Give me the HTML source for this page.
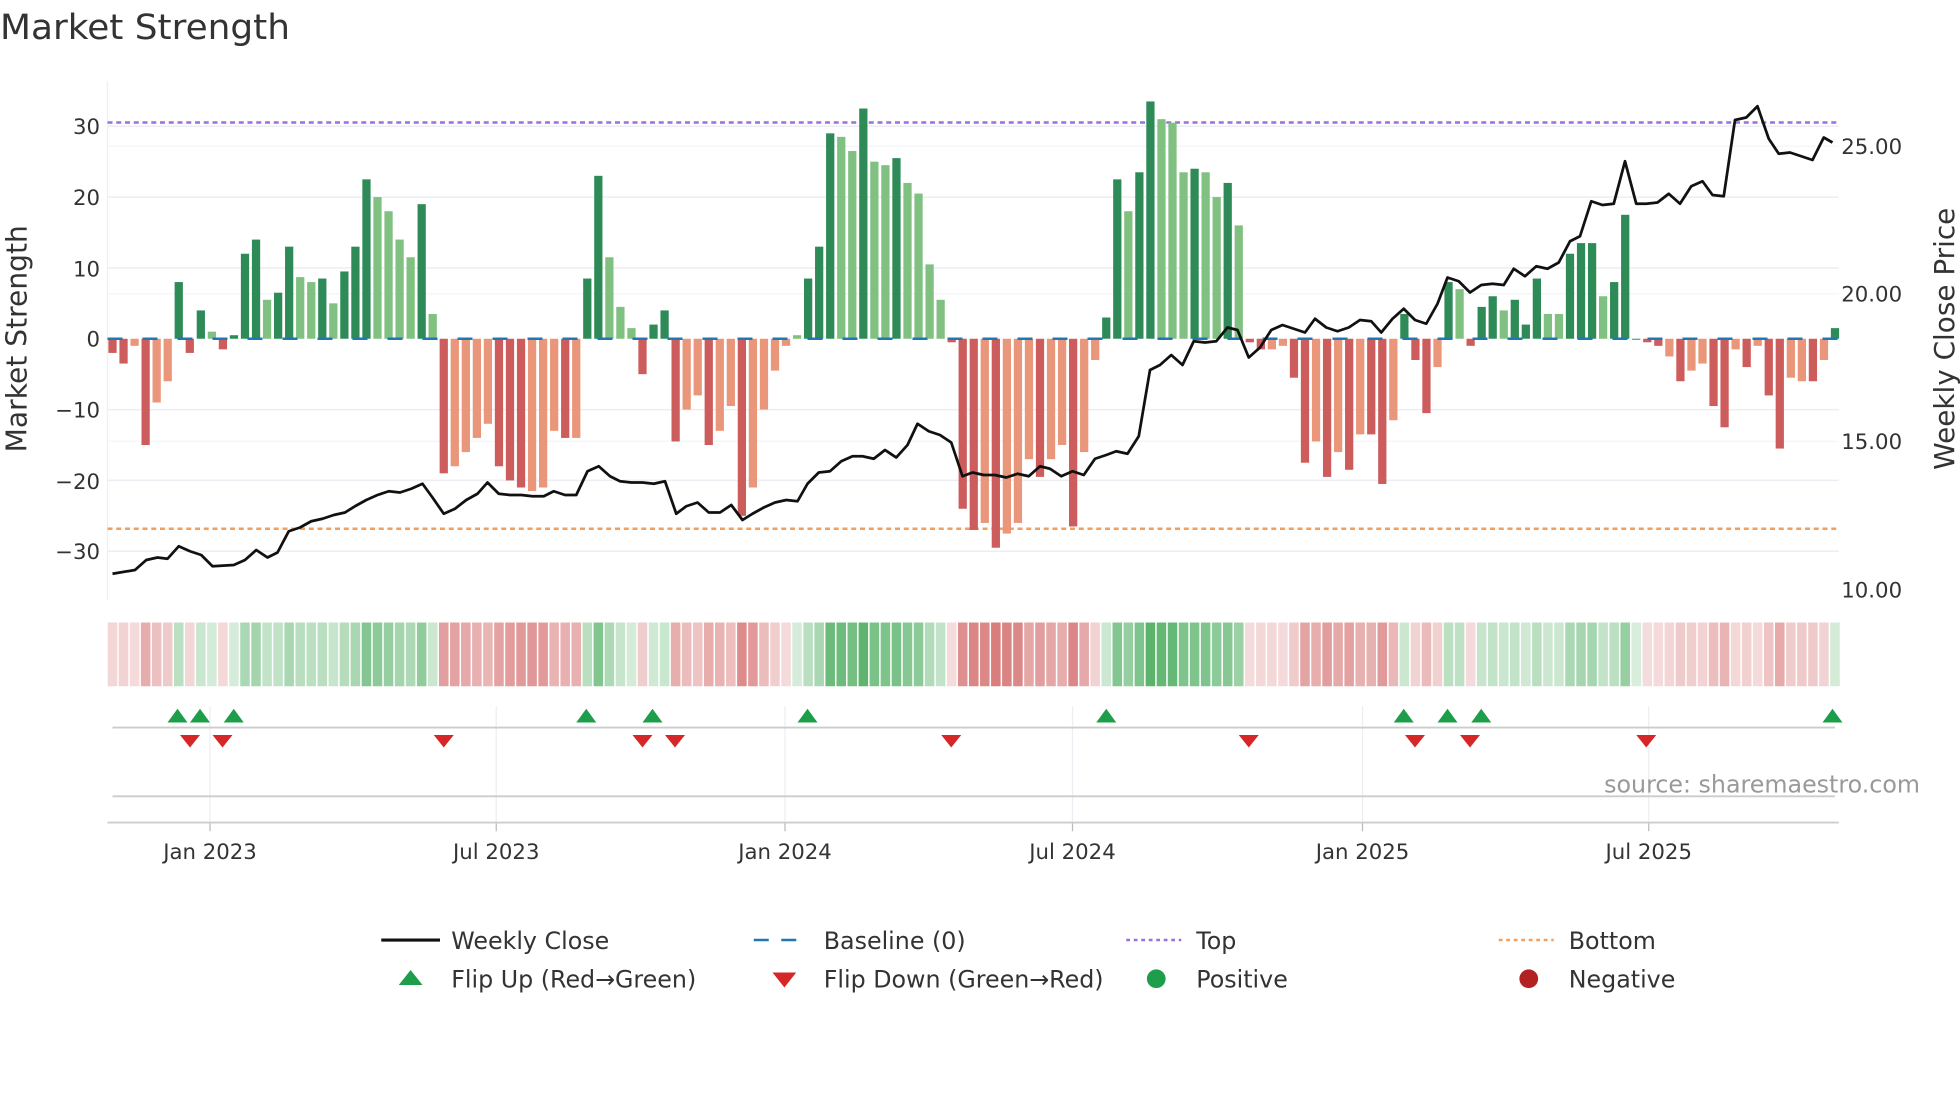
<!DOCTYPE html>
<html><head><meta charset="utf-8"><style>
html,body{margin:0;padding:0;background:#fff;}
svg{display:block;font-family:"DejaVu Sans","Liberation Sans",sans-serif;}
</style></head><body>
<svg id="s" width="1960" height="1102" viewBox="0 0 1568 881.6" xmlns="http://www.w3.org/2000/svg">
<rect width="1568" height="882" fill="#fff"/>
<text x="0" y="31" font-size="28" fill="#333" textLength="232" lengthAdjust="spacingAndGlyphs">Market Strength</text>
<g id="grid"></g>
<g id="bars"></g>
<g id="heat"></g>
<g id="low"></g>
<polyline id="price" fill="none" stroke="#111" stroke-width="2.2" stroke-linejoin="round"/>
<g font-size="17" fill="#333">
<text x="80" y="107" text-anchor="end">30</text>
<text x="80" y="164" text-anchor="end">20</text>
<text x="80" y="221" text-anchor="end">10</text>
<text x="80" y="277" text-anchor="end">0</text>
<text x="80" y="334" text-anchor="end">−10</text>
<text x="80" y="391" text-anchor="end">−20</text>
<text x="80" y="447" text-anchor="end">−30</text>
<text x="1473" y="123">25.00</text>
<text x="1473" y="241">20.00</text>
<text x="1473" y="359">15.00</text>
<text x="1473" y="478">10.00</text>
<text x="168" y="687" text-anchor="middle">Jan 2023</text>
<text x="397" y="687" text-anchor="middle">Jul 2023</text>
<text x="628" y="687" text-anchor="middle">Jan 2024</text>
<text x="858" y="687" text-anchor="middle">Jul 2024</text>
<text x="1090" y="687" text-anchor="middle">Jan 2025</text>
<text x="1319" y="687" text-anchor="middle">Jul 2025</text>
</g>
<text transform="translate(21,271) rotate(-90)" text-anchor="middle" font-size="22.5" fill="#333">Market Strength</text>
<text transform="translate(1563,271) rotate(-90)" text-anchor="middle" font-size="22.3" fill="#333">Weekly Close Price</text>
<text x="1536" y="634" text-anchor="end" font-size="19" fill="#999">source: sharemaestro.com</text>
<g font-size="19" fill="#333">
<line x1="305" y1="752" x2="352" y2="752" stroke="#111" stroke-width="2.5"/>
<text x="361" y="759">Weekly Close</text>
<line x1="603" y1="752" x2="646" y2="752" stroke="#1f77b4" stroke-width="2" stroke-dasharray="12,10"/>
<text x="659" y="759">Baseline (0)</text>
<line x1="901" y1="752" x2="945" y2="752" stroke="#9b6fe0" stroke-width="2" stroke-dasharray="3,3"/>
<text x="957" y="759">Top</text>
<line x1="1199" y1="752" x2="1243" y2="752" stroke="#f0a060" stroke-width="2" stroke-dasharray="3,3"/>
<text x="1255" y="759">Bottom</text>
<polygon points="319,788 338,788 328.5,776" fill="#1e9e4a"/>
<text x="361" y="790">Flip Up (Red→Green)</text>
<polygon points="618,778 637,778 627.5,790" fill="#d62728"/>
<text x="659" y="790">Flip Down (Green→Red)</text>
<circle cx="925" cy="783" r="7.5" fill="#1e9e4a"/>
<text x="957" y="790">Positive</text>
<circle cx="1223" cy="783" r="7.5" fill="#b22222"/>
<text x="1255" y="790">Negative</text>
</g>
</svg>
<script>
var NS="http://www.w3.org/2000/svg";
function el(p,t,a){var e=document.createElementNS(NS,t);for(var k in a)e.setAttribute(k,a[k]);p.appendChild(e);return e;}
var V=[[-2,1],[-3.5,1],[-1,0],[-15,1],[-9,0],[-6,0],[8,1],[-2,1],[4,1],[1,0],[-1.5,1],[0.5,1],[12,1],[14,1],[5.5,0],[6.5,1],[13,1],[8.7,0],[8,0],[8.5,1],[5,0],[9.5,1],[13,1],[22.5,1],[20,0],[18,0],[14,0],[11.5,0],[19,1],[3.5,0],
[-19,1],[-18,0],[-16,0],[-14,0],[-12,0],[-18,1],[-20,1],[-21,1],[-21.5,0],[-21,0],[-13,0],[-14,1],[-14,0],[8.5,1],[23,1],[11.5,0],[4.5,0],[1.5,0],[-5,1],[2,1],[4,1],
[-14.5,1],[-10,0],[-8,0],[-15,1],[-13,0],[-9.5,0],[-25,1],[-21,0],[-10,0],[-4.5,0],[-1,0],[0.5,0],[8.5,1],[13,1],[29,1],[28.5,0],[26.5,0],[32.5,1],[25,0],[24.5,0],[25.5,1],[22,0],[20.5,0],[10.5,0],[5.5,0],
[-0.5,1],[-24,1],[-27,1],[-26,0],[-29.5,1],[-27.5,0],[-26,0],[-17,0],[-19.5,1],[-17,0],[-15,0],[-26.5,1],[-16,0],[-3,0],[3,1],[22.5,1],[18,0],[23.5,1],[33.5,1],[31,0],[30.5,0],[23.5,0],[24,1],[23.5,0],[20,0],[22,1],[16,0],
[-0.5,1],[-1.5,1],[-1.5,0],[-1,0],[-5.5,1],[-17.5,1],[-14.5,0],[-19.5,1],[-16,0],[-18.5,1],[-13.5,0],[-13.5,1],[-20.5,1],[-11.5,0],[3.5,1],[-3,1],[-10.5,1],[-4,0],[8,1],[7,0],[-1,1],[4.5,1],[6,1],[4,0],[5.5,1],[2,1],[8.5,1],[3.5,0],[3.5,0],[12,1],[13.5,1],[13.5,1],[6,0],[8,1],[17.5,1],
[0,1],[-0.5,1],[-1,1],[-2.5,0],[-6,1],[-4.5,0],[-3.5,0],[-9.5,1],[-12.5,1],[-1.5,0],[-4,1],[-1,0],[-8,1],[-15.5,1],[-5.5,0],[-6,0],[-6,1],[-3,0],[1.5,1]];
var n=V.length,x0=90,x1=1468,dx=(x1-x0)/(n-1),Y0=271,k=5.667;
var g=document.getElementById("grid");
[30,20,10,-10,-20,-30].forEach(function(v){el(g,"line",{x1:86,x2:1471,y1:Y0-k*v,y2:Y0-k*v,stroke:"#eceef3","stroke-width":1.2});});
[117,235,353].forEach(function(y){el(g,"line",{x1:86,x2:1471,y1:y,y2:y,stroke:"#f3f4f7","stroke-width":1});});
el(g,"line",{x1:86,x2:86,y1:65,y2:480,stroke:"#f0f0f0"});
var b=document.getElementById("bars");
el(b,"line",{x1:86,x2:1471,y1:98,y2:98,stroke:"#9b6fe0","stroke-width":2,"stroke-dasharray":"4,3"});
el(b,"line",{x1:86,x2:1471,y1:423,y2:423,stroke:"#f0a060","stroke-width":2,"stroke-dasharray":"4,3"});
var h=document.getElementById("heat");
for(var i=0;i<n;i++){var v=V[i][0],d=V[i][1],x=x0+i*dx,w=6.6;
 var c=v>=0?(d?"#2e8b57":"#80c080"):(d?"#cd5c5c":"#e9967a");
 var y=v>=0?Y0-k*v:Y0,hh=Math.max(Math.abs(k*v),0.8);
 el(b,"rect",{x:x-w/2,y:y,width:w,height:hh,fill:c});
 var a=0.2+0.65*Math.min(Math.abs(v),34)/34;
 el(h,"rect",{x:x-dx/2+0.6,y:498,width:dx-1.2,height:51,fill:v>=0?"rgb(60,165,80)":"rgb(205,85,85)","fill-opacity":a});
}
el(b,"line",{x1:86,x2:1471,y1:Y0,y2:Y0,stroke:"#1f77b4","stroke-width":2,"stroke-dasharray":"12,16"});
var l=document.getElementById("low");
[168,397,628,858,1090,1319].forEach(function(x){el(l,"line",{x1:x,x2:x,y1:565,y2:658,stroke:"#eceef3"});el(l,"line",{x1:x,x2:x,y1:658,y2:665,stroke:"#bbb"});});
el(l,"line",{x1:90,x2:1468,y1:582,y2:582,stroke:"#ccc","stroke-width":1.5});
el(l,"line",{x1:90,x2:1468,y1:637,y2:637,stroke:"#ccc","stroke-width":1.5});
el(l,"line",{x1:86,x2:1471,y1:658,y2:658,stroke:"#ccc","stroke-width":1.5});
[142,160,187,469,522,646,885,1123,1158,1185,1466].forEach(function(x){el(l,"polygon",{points:(x-8)+",578 "+(x+8)+",578 "+x+",567",fill:"#1e9e4a"});});
[152,178,355,514,540,761,999,1132,1176,1317].forEach(function(x){el(l,"polygon",{points:(x-8)+",588 "+(x+8)+",588 "+x+",598",fill:"#d62728"});});
var P=[90,459,108,456,117,448,126,446,134,447,143,437,152,441,161,444,170,453,187,452,196,448,205,440,214,446,222,442,231,425,240,422,249,417,258,415,267,412,276,410,284,405,293,400,302,396,311,393,320,394,329,391,338,387,346,398,355,411,364,407,373,400,382,395,390,386,399,395,408,396,417,396,426,397,435,397,443,393,452,396,461,396,470,377,479,373,488,381,496,385,505,386,514,386,523,387,532,385,541,411,549,405,558,402,567,410,576,410,585,404,594,416,602,411,611,406,620,402,629,400,638,401,646,387,655,378,664,377,673,369,682,365,690,365,699,367,708,360,717,366,726,356,734,339,743,345,752,348,761,354,770,381,778,378,787,380,796,380,805,382,814,379,823,381,832,373,840,375,849,381,858,377,867,380,876,367,885,364,893,361,902,363,911,349,920,296,928,292,937,284,946,292,955,273,964,274,973,273,982,262,990,264,999,286,1008,278,1017,264,1026,260,1035,263,1044,266,1052,255,1061,262,1070,265,1079,262,1088,256,1097,257,1105,266,1114,255,1123,247,1132,256,1141,259,1150,243,1158,222,1167,225,1176,234,1185,228,1194,227,1203,228,1211,215,1220,221,1229,213,1238,215,1247,210,1256,193,1264,189,1273,161,1282,164,1291,163,1300,129,1309,163,1317,163,1326,162,1335,155,1344,163,1353,149,1362,145,1370,156,1379,157,1388,96,1397,94,1406,85,1415,111,1423,123,1432,122,1441,125,1450,128,1459,110,1466,114];
var s=[];for(var j=0;j<P.length;j+=2)s.push(P[j]+","+P[j+1]);
document.getElementById("price").setAttribute("points",s.join(" "));
</script>
</body></html>
